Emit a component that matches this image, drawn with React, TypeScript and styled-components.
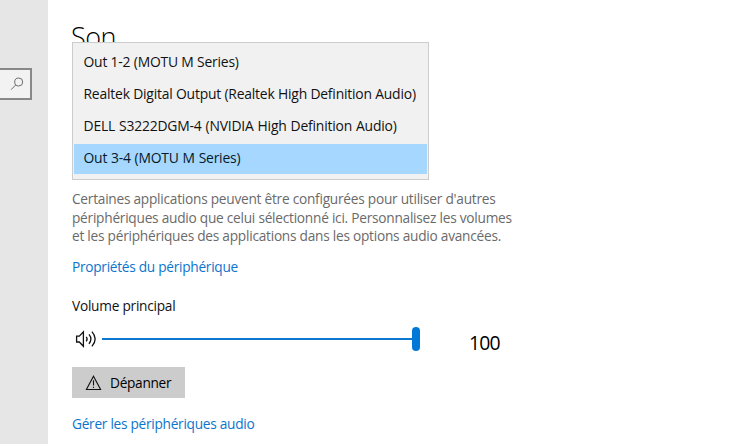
import React from 'react';
import styled, { createGlobalStyle } from 'styled-components';

const GlobalStyle = createGlobalStyle`
  * { box-sizing: border-box; }
  body {
    margin: 0;
    background: #fff;
    font-family: "Open Sans", "Noto Sans", sans-serif;
    overflow: hidden;
  }
`;

const Page = styled.div`
  display: flex;
  width: 743px;
  height: 444px;
  color: #111;
  font-size: 13.7px;
  letter-spacing: -0.25px;
  line-height: 20px;
`;

const Sidebar = styled.aside`
  width: 48px;
  flex: none;
  padding-top: 68px;
  background: #e6e6e6;
`;

const SearchBox = styled.div`
  display: flex;
  align-items: center;
  justify-content: flex-end;
  width: 32px;
  height: 32px;
  padding-right: 6px;
  background: #f2f2f2;
  border: 2px solid #888;
  border-left: 0;
`;

const Content = styled.main`
  display: flex;
  flex-direction: column;
  align-items: flex-start;
  padding-left: 24px;
`;

const Title = styled.h1`
  height: 42px;
  margin: 0 0 0 -1px;
  padding-top: 19px;
  font-size: 27px;
  font-weight: 300;
  line-height: 36px;
  letter-spacing: -0.5px;
  color: #000;
`;

const Dropdown = styled.ul`
  position: relative;
  display: flex;
  flex-direction: column;
  gap: 2px;
  width: 357px;
  height: 138px;
  margin: 0;
  padding: 5px 1px;
  list-style: none;
  background: #f1f1f1;
  border: 1px solid #ccc;
`;

const Option = styled.li<{ $selected?: boolean; $wordGap?: number }>`
  height: 30px;
  padding-left: 9.5px;
  font-size: 13.9px;
  letter-spacing: -0.2px;
  line-height: 28px;
  white-space: nowrap;
  word-spacing: ${(p) => p.$wordGap ?? 0}px;
  color: ${(p) => (p.$selected ? '#06192b' : '#111')};
  background: ${(p) => (p.$selected ? '#a5d7ff' : 'transparent')};
`;

const Description = styled.p`
  margin: 10px 0 11.5px;
  line-height: 18.5px;
  color: #6a6a6a;
  white-space: nowrap;
`;

const Link = styled.a`
  letter-spacing: -0.28px;
  color: #0c74cc;
  text-decoration: none;
`;

const Label = styled.div`
  margin-top: 19px;
`;

const VolumeRow = styled.div`
  display: flex;
  align-items: center;
  height: 24px;
  margin-top: 11px;
`;

const SpeakerSlot = styled.span`
  display: flex;
  width: 30px;
`;

const Slider = styled.div`
  display: flex;
  align-items: center;
  width: 318px;
`;

const Track = styled.div`
  flex: 1;
  height: 2px;
  background: #0d78d0;
`;

const Thumb = styled.div`
  width: 8px;
  height: 24px;
  border-radius: 4px;
  background: #0078d7;
`;

const Value = styled.span`
  margin: 7.5px 0 0 49px;
  font-size: 19.4px;
  letter-spacing: -0.8px;
  color: #000;
`;

const Button = styled.button`
  display: flex;
  align-items: center;
  gap: 8px;
  width: 113px;
  height: 31px;
  margin: 16px 0;
  padding: 1px 0 0 13px;
  border: 0;
  background: #ccc;
  color: #000;
  font: inherit;
  letter-spacing: -0.3px;
`;

const SearchIcon = () => (
  <svg width="14" height="14" viewBox="0 0 14 14" fill="none" stroke="#6e6e6e" strokeWidth="1">
    <circle cx="8.7" cy="5" r="4" />
    <path d="M5.8 7.9 1 12.7" />
  </svg>
);

const SpeakerIcon = () => (
  <svg width="26" height="20" viewBox="0 0 26 20" fill="none" stroke="#111" strokeWidth="1.3">
    <path d="M4.6 7.2H7.3L11.4 2.9V17.3L7.3 13H4.6Z" />
    <path d="M14.2 7.9Q16 10 14.2 12.3" />
    <path d="M17 5.4Q20.8 10 17 14.8" />
    <path d="M19.9 2.6Q26.4 10 19.9 17.4" />
  </svg>
);

const WarningIcon = () => (
  <svg width="17" height="16" viewBox="0 0 17 16" fill="none" stroke="#111" strokeWidth="1.1">
    <path d="M8.5 1.2 15.6 14.5H1.4Z" />
    <path d="M8.5 5.3V10.6M8.5 11.7V13" />
  </svg>
);

const devices = [
  { name: 'Out 1-2 (MOTU M Series)' },
  { name: 'Realtek Digital Output (Realtek High Definition Audio)' },
  { name: 'DELL S3222DGM-4 (NVIDIA High Definition Audio)', wordGap: 0.6 },
  { name: 'Out 3-4 (MOTU M Series)', selected: true, wordGap: 0.4 },
];

export default function App() {
  return (
    <>
      <GlobalStyle />
      <Page>
        <Sidebar>
          <SearchBox>
            <SearchIcon />
          </SearchBox>
        </Sidebar>
        <Content>
          <Title>Son</Title>
          <Dropdown>
            {devices.map((d) => (
              <Option key={d.name} $selected={d.selected} $wordGap={d.wordGap}>
                {d.name}
              </Option>
            ))}
          </Dropdown>
          <Description>
            Certaines applications peuvent être configurées pour utiliser d'autres
            <br />
            périphériques audio que celui sélectionné ici. Personnalisez les volumes
            <br />
            et les périphériques des applications dans les options audio avancées.
          </Description>
          <Link>Propriétés du périphérique</Link>
          <Label>Volume principal</Label>
          <VolumeRow>
            <SpeakerSlot>
              <SpeakerIcon />
            </SpeakerSlot>
            <Slider>
              <Track />
              <Thumb />
            </Slider>
            <Value>100</Value>
          </VolumeRow>
          <Button>
            <WarningIcon />
            Dépanner
          </Button>
          <Link>Gérer les périphériques audio</Link>
        </Content>
      </Page>
    </>
  );
}
